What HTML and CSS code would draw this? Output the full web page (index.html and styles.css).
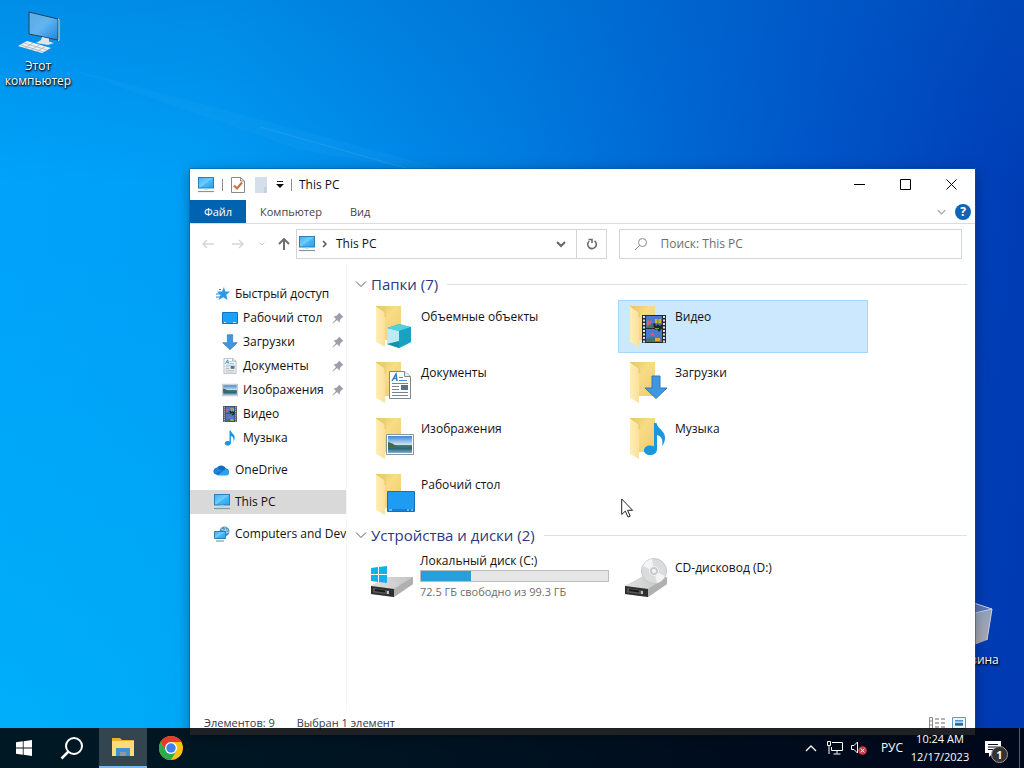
FILE: index.html
```html
<!DOCTYPE html>
<html lang="ru">
<head>
<meta charset="utf-8">
<title>This PC</title>
<link rel="stylesheet" href="styles.css">
</head>
<body>
<svg class="defs" width="0" height="0" aria-hidden="true">
  <defs>
    <linearGradient id="g-screen" x1="0" y1="0" x2="1" y2="1"><stop offset="0" stop-color="#3fb0f5"/><stop offset=".5" stop-color="#74cdfb"/><stop offset=".52" stop-color="#4ab9f7"/><stop offset="1" stop-color="#2b9fec"/></linearGradient>
    <linearGradient id="g-desk" x1="0" y1="0" x2="1" y2="1"><stop offset="0" stop-color="#5fa8e0"/><stop offset=".5" stop-color="#62b4f0"/><stop offset="1" stop-color="#1a86dc"/></linearGradient>
    <linearGradient id="g-back" x1="0" y1="0" x2="1" y2="1"><stop offset="0" stop-color="#e6c566"/><stop offset=".4" stop-color="#f8dd86"/><stop offset="1" stop-color="#ecca6c"/></linearGradient>
    <linearGradient id="g-front" x1="0" y1="0" x2="1" y2="0"><stop offset="0" stop-color="#ffeeb8"/><stop offset="1" stop-color="#fbe09a"/></linearGradient>
    <linearGradient id="g-drive" x1="0" y1="0" x2="1" y2="0"><stop offset="0" stop-color="#e0e0e0"/><stop offset="1" stop-color="#c4c4c4"/></linearGradient>
    <linearGradient id="g-sky" x1="0" y1="0" x2="0" y2="1"><stop offset="0" stop-color="#3f86d4"/><stop offset=".5" stop-color="#c9e4f5"/><stop offset=".55" stop-color="#4a7a78"/><stop offset=".75" stop-color="#2f6675"/><stop offset="1" stop-color="#7fb2cc"/></linearGradient>
    <linearGradient id="g-bin" x1="0" y1="0" x2="0" y2="1"><stop offset="0" stop-color="#8fa0c4"/><stop offset="1" stop-color="#a9a9ad"/></linearGradient>
  </defs>
  <symbol id="pc" viewBox="0 0 18 16">
    <rect x="1.5" y=".5" width="15" height="10.500" fill="url(#g-screen)" stroke="#2d7fb8"/>
    <path d="M7 11h4v1.500H7z" fill="#9dc6e0"/><path d="M1 14.500h16" stroke="#7f98a8" stroke-width="1.200"/>
  </symbol>
  <symbol id="folder" viewBox="0 0 48 48">
    <path d="M8 4h24v34H8z" fill="url(#g-back)"/>
    <path d="M7 4l9 6v35l-9-5z" fill="url(#g-front)"/>
    <path d="M7 4l9 6v5" fill="none" stroke="#eac66c"/>
  </symbol>
  <symbol id="arrow" viewBox="0 0 24 24">
    <path d="M8 1h8v12h7L12 23.500 1 13h7z" fill="#3e97e0" stroke="#2f79b9"/>
  </symbol>
  <symbol id="note" viewBox="0 0 24 34">
    <path d="M11 1h2.500c1 6 9.500 8 8.500 16-.3 3-1.500 5-3 7 1-5 .5-9-5-11v14c0 4-3 6-7 6-3.500 0-6-2-6-4.500C1 25 4 23.500 7 23.500c1.500 0 3 .3 4 1z" fill="#1b97e0"/>
  </symbol>
  <symbol id="film" viewBox="0 0 24 28">
    <path d="M0 0h24v28H0z" fill="#23272e"/>
    <path d="M4 1h16v12H4zM4 14h16v13H4z" fill="#4a78cd"/>
    <path d="M4 10q4-3 9-1v4H4zM4 24q5-3 9-1v4H4z" fill="#3d766a"/>
    <path d="M5 5l5 1-2 4-3 1zM8 20l3-3 2 4z" fill="#e0567a"/>
    <path d="M13 4h6v4h-6zM13 23h5v3h-5z" fill="#e0ad25"/><path d="M11 9l2-1 1 3 2-2 2 2 2-2v4l-3 4-2-3-2 1z" fill="#20252b"/><path d="M15 4h2v4h-2zM13 13h4v1h-4z" fill="#76a83b"/>
    <path d="M2 1v27M22 1v27" stroke="#dfe5e9" stroke-width="2" stroke-dasharray="2 1.500"/>
  </symbol>
  <symbol id="picture" viewBox="0 0 28 21">
    <path d="M.5.5h27v20H.5z" fill="#fff" stroke="#8b949b"/>
    <path d="M2 2h24v17H2z" fill="url(#g-sky)"/><path d="M2 8q5 1 8 4t16 1v1H2z" fill="#426b4c"/>
  </symbol>
  <symbol id="doc" viewBox="0 0 22 28">
    <path d="M.5.5h15l6 5v22H.5z" fill="#fff" stroke="#7c8790"/><path d="M15.500.5v5h6" fill="#e9edf0" stroke="#7c8790"/>
    <path d="M3 10l4-7 1 7M5 7.500h3" fill="none" stroke="#2d7fc4" stroke-width="1.500"/>
    <path d="M10 6.500h4M10 9.500h8M3 12.500h16" stroke="#4a8fc6"/><path d="M3 15.500h7M3 18.500h7M3 21.500h16M3 24.500h16" stroke="#77848e"/><path d="M12 14h7v5h-7z" fill="#55748a"/>
  </symbol>
  <symbol id="screen" viewBox="0 0 28 21">
    <path d="M.5.5h27v20H.5z" fill="#1e9cf4" stroke="#1470b8"/><path d="M1 19h26" stroke="#0f69b4"/><path d="M2 19h3M20 19h2M24 19h2" stroke="#d4ecff"/>
  </symbol>
  <symbol id="pin" viewBox="0 0 12 12">
    <path d="M7 .5L11.500 5l-1.500.5-2 2.500-.5 2.500L5 8 1 11.500.5 11 4 7 1.500 4.500 4 4l2.500-2z" fill="#9aa0a5"/>
  </symbol>
  <symbol id="drive" viewBox="0 0 44 24">
    <path d="M1 11L18 2h25v7L24 22 1 19z" fill="#bdbdbd"/>
    <path d="M1 11L18 2h25L24 14z" fill="url(#g-drive)"/>
    <path d="M1 11l23 3v8L1 19z" fill="#2e2e2e"/><path d="M3 13l16 2.500v4L3 17.500z" fill="#575757"/><path d="M5 15l10 1.500" stroke="#1b1b1b" stroke-width="2"/><path d="M18 16v3" stroke="#e6e6e6" stroke-width="1.500"/>
    <path d="M24 14L43 2v7L24 22z" fill="#b0b0b0"/>
  </symbol>
  <symbol id="chev" viewBox="0 0 12 8"><path d="M1 1.500l5 5 5-5" fill="none" stroke="currentColor"/></symbol>
  <symbol id="winlogo" viewBox="0 0 16 16"><path d="M0 2.300l6.800-1v6.300H0zM7.600 1.200L16 0v7.600H7.600zM0 8.400h6.800v6.300L0 13.700zM7.600 8.400H16V16l-8.400-1.200z" fill="currentColor"/></symbol>
</svg>

<main class="desktop">
  <svg class="wallpaper" viewBox="0 0 1024 768" preserveAspectRatio="none" aria-hidden="true">
    <path d="M60 66L500 184 300 150z" fill="#37b5ff" opacity=".1"/>
    <path d="M260 127L420 172" stroke="#6cc4ff" opacity=".2"/>
  </svg>
  <a class="shortcut shortcut-pc" href="#">
    <svg width="48" height="44" viewBox="0 0 48 44">
      <path d="M15 1l29 7v21L15 23z" fill="url(#g-desk)" stroke="#23415c"/><path d="M44 8l1 .5v21l-1-.5" stroke="#e8dcc8" fill="none"/>
      <path d="M28 26l7 1.500v3l5 1.500-6 2-12-2 5-3z" fill="#dfe3e8"/>
      <path d="M13 30l24 7-9 5-24-7z" fill="#f1f1f1"/><path d="M10 32l23 7M7 34l23 7M19 32l-8 5M25 34l-8 5M31 35.500l-8 5" stroke="#a9b0b5" stroke-width=".8"/>
    </svg>
    <span>Этот компьютер</span>
  </a>
  <a class="shortcut shortcut-bin" href="#">
    <svg width="48" height="48" viewBox="0 0 48 48"><path d="M6 8l18-5 18 6-5 31-13 5-13-5z" fill="url(#g-bin)"/><path d="M6 8l18-5 18 6-17 4z" fill="#5d76b4" stroke="#c4cce0"/><path d="M42 9l-5 31" stroke="#cfd2da"/></svg>
    <span>Корзина</span>
  </a>

  <section class="window" aria-label="This PC">
    <header class="titlebar">
      <svg width="18" height="16"><use href="#pc"/></svg>
      <i class="sep"></i>
      <button class="quick" aria-label="Свойства"><svg width="14" height="16" viewBox="0 0 14 16"><path d="M.5.5h9l4 3.500v11.500H.5z" fill="#fff" stroke="#8a8a8a"/><path d="M9.500.5V4h4" fill="none" stroke="#8a8a8a"/><path d="M3 8.500l3 3 5-6" fill="none" stroke="#c8703c" stroke-width="2"/></svg></button>
      <button class="quick" aria-label="Новая папка"><svg width="14" height="16" viewBox="0 0 14 16"><path d="M1 0h12v16H1z" fill="#d5dfeb"/><path d="M10 10h3v6h-3z" fill="#c5d1e0"/></svg></button>
      <button class="quick quick-menu" aria-label="Настройка панели"><svg width="8" height="8" viewBox="0 0 8 8"><path d="M1 .5h6" stroke="#222"/><path d="M0 3h8L4 7z" fill="#111"/></svg></button>
      <i class="sep"></i>
      <h1>This PC</h1>
      <div class="controls">
        <button aria-label="Свернуть"><svg width="11" height="11" viewBox="0 0 11 11"><path d="M0 5.500h11" stroke="#000"/></svg></button>
        <button aria-label="Развернуть"><svg width="11" height="11" viewBox="0 0 11 11"><path d="M.5.5h10v10H.5z" fill="none" stroke="#000"/></svg></button>
        <button aria-label="Закрыть"><svg width="11" height="11" viewBox="0 0 11 11"><path d="M.5.5l10 10M10.500.5l-10 10" stroke="#000"/></svg></button>
      </div>
    </header>
    <nav class="tabs">
      <button class="tab tab-file">Файл</button>
      <button class="tab">Компьютер</button>
      <button class="tab">Вид</button>
      <button class="expand" aria-label="Развернуть ленту"><svg width="9" height="6" viewBox="0 0 12 8"><path d="M1 1.500l5 5 5-5" fill="none" stroke="#b5b5b5" stroke-width="2"/></svg></button>
      <button class="help" aria-label="Справка">?</button>
    </nav>
    <div class="addressrow">
      <div class="arrows">
        <button aria-label="Назад"><svg width="12" height="10" viewBox="0 0 12 10"><path d="M12 5H1M5 1L1 5l4 4" fill="none" stroke="#d6d6d6" stroke-width="1.500"/></svg></button>
        <button aria-label="Вперёд"><svg width="12" height="10" viewBox="0 0 12 10"><path d="M0 5h11M7 1l4 4-4 4" fill="none" stroke="#d6d6d6" stroke-width="1.500"/></svg></button>
        <button class="recent" aria-label="Последние"><svg width="6" height="4" viewBox="0 0 12 8"><path d="M1 1l5 5 5-5" fill="none" stroke="#cfcfcf" stroke-width="2"/></svg></button>
        <button class="up" aria-label="Вверх"><svg width="12" height="12" viewBox="0 0 12 12"><path d="M6 12V1M1 6l5-5 5 5" fill="none" stroke="#6e6e6e" stroke-width="2"/></svg></button>
      </div>
      <div class="address">
        <svg width="18" height="16"><use href="#pc"/></svg>
        <svg class="crumb" width="5" height="8" viewBox="0 0 5 8"><path d="M1 1l3 3-3 3" fill="none" stroke="#555" stroke-width="1.500"/></svg>
        <a href="#">This PC</a>
        <button class="drop" aria-label="Журнал"><svg width="10" height="7" viewBox="0 0 10 7"><path d="M1 1l4 4 4-4" fill="none" stroke="#666" stroke-width="2"/></svg></button>
        <button class="refresh" aria-label="Обновить"><svg width="12" height="12" viewBox="0 0 12 12"><path d="M8.500 2.800A4.300 4.300 0 1 1 3.300 3M2.500 1.500h3.500V5" fill="none" stroke="#6a6a6a" stroke-width="1.600"/></svg></button>
      </div>
      <label class="search">
        <svg width="14" height="14" viewBox="0 0 14 14"><circle cx="8.500" cy="5.500" r="4" fill="none" stroke="#8a8a8a"/><path d="M5.500 8.500L1 13" stroke="#8a8a8a"/></svg>
        <input type="text" placeholder="Поиск: This PC" aria-label="Поиск">
      </label>
    </div>
    <div class="body">
      <nav class="sidebar">
        <a class="root" href="#"><svg width="18" height="16" viewBox="0 0 18 16"><path d="M11 1l1.200 4.500H17l-3.700 3.200L14.500 14l-4.300-2.800L5.500 14l2-5L4 5.500h5z" fill="#2f98e4"/><path d="M3 8h4M3 11h4M6 3.500h2" stroke="#2a7fc9"/></svg>Быстрый доступ</a>
        <a href="#"><svg width="16" height="16" viewBox="0 0 16 16"><path d="M.5 2.500h15v11H.5z" fill="#1ea0f6" stroke="#1573ba"/><path d="M2 12.500h2M11 12.500h3" stroke="#cce8ff"/></svg><span>Рабочий стол</span><svg class="pin" width="12" height="12"><use href="#pin"/></svg></a>
        <a href="#"><svg width="16" height="16"><use href="#arrow"/></svg><span>Загрузки</span><svg class="pin" width="12" height="12"><use href="#pin"/></svg></a>
        <a href="#"><svg width="16" height="16"><use href="#doc"/></svg><span>Документы</span><svg class="pin" width="12" height="12"><use href="#pin"/></svg></a>
        <a href="#"><svg width="16" height="16"><use href="#picture"/></svg><span>Изображения</span><svg class="pin" width="12" height="12"><use href="#pin"/></svg></a>
        <a href="#"><svg width="16" height="16"><use href="#film"/></svg><span>Видео</span></a>
        <a href="#"><svg width="16" height="16"><use href="#note"/></svg><span>Музыка</span></a>
        <a class="root spaced" href="#"><svg width="18" height="16" viewBox="0 0 18 16"><path d="M4.500 13A3.700 3.700 0 0 1 4 5.700 5.200 5.200 0 0 1 13 6.500a3.400 3.400 0 0 1 1 6.500z" fill="#0f6cc4"/><path d="M4 13.500L12.500 7A3.400 3.400 0 0 1 14 13.500z" fill="#2aa3ee"/><path d="M4 5.700A3.700 3.700 0 0 0 1.500 12L10 9z" fill="#1a83da"/></svg>OneDrive</a>
        <a class="root spaced current" href="#" aria-current="page"><svg width="18" height="16"><use href="#pc"/></svg>This PC</a>
        <a class="root spaced" href="#"><svg width="18" height="16" viewBox="0 0 18 16"><circle cx="11.500" cy="5.500" r="5" fill="#4e93bf"/><path d="M8 3q3 2 7 1M9 8q4-1 7-2M12 1q2 4 0 9" fill="none" stroke="#b5d9ec"/><path d="M1.500 5.500h11v7h-11z" fill="url(#g-screen)" stroke="#2e7fb5"/><path d="M3 15h8" stroke="#66869a"/></svg><span>Computers and Devices</span></a>
      </nav>
      <div class="content">
        <h2><svg width="12" height="8"><use href="#chev"/></svg>Папки (7)</h2>
        <div class="grid">
          <a class="tile" href="#"><svg width="48" height="48" viewBox="0 0 48 48"><use href="#folder"/><path d="M18 26l12-4 12 3v15l-12 6-12-4z" fill="#2cb8d2"/><path d="M18 26l12 3v11l-12 2z" fill="#b9edf3"/><path d="M18 26l12-4 12 3-12 4z" fill="#53cfdf"/><path d="M30 29l12-4v15l-12 6z" fill="#18a2c2"/><path d="M18 42l12-3v7z" fill="#1591ae"/></svg><span>Объемные объекты</span></a>
          <a class="tile selected" href="#"><svg width="48" height="48" viewBox="0 0 48 48"><use href="#folder"/><use href="#film" x="19" y="13" width="24" height="28"/></svg><span>Видео</span></a>
          <a class="tile" href="#"><svg width="48" height="48" viewBox="0 0 48 48"><use href="#folder"/><use href="#doc" x="20" y="13" width="22" height="28"/></svg><span>Документы</span></a>
          <a class="tile" href="#"><svg width="48" height="48" viewBox="0 0 48 48"><use href="#folder"/><use href="#arrow" x="21" y="17" width="24" height="24"/></svg><span>Загрузки</span></a>
          <a class="tile" href="#"><svg width="48" height="48" viewBox="0 0 48 48"><use href="#folder"/><use href="#picture" x="17" y="20" width="28" height="21"/></svg><span>Изображения</span></a>
          <a class="tile" href="#"><svg width="48" height="48" viewBox="0 0 48 48"><use href="#folder"/><use href="#note" x="20" y="8" width="24" height="34"/></svg><span>Музыка</span></a>
          <a class="tile" href="#"><svg width="48" height="48" viewBox="0 0 48 48"><use href="#folder"/><use href="#screen" x="18" y="21" width="28" height="21"/></svg><span>Рабочий стол</span></a>
        </div>
        <h2><svg width="12" height="8"><use href="#chev"/></svg>Устройства и диски (2)</h2>
        <div class="grid">
          <a class="tile disk" href="#"><svg width="48" height="48" viewBox="0 0 48 48"><use href="#drive" x="1" y="22" width="44" height="24"/><path d="M2 15l7-1v7H2zM10 14l8-1v8h-8zM2 22h7v7l-7-1zM10 22h8v8l-8-1z" fill="#0fb3e6"/></svg>
            <span class="diskinfo"><span>Локальный диск (C:)</span><span class="bar" role="meter" aria-label="Занято" aria-valuemin="0" aria-valuemax="100" aria-valuenow="27"><i style="width:27%"></i></span><small>72.5 ГБ свободно из 99.3 ГБ</small></span></a>
          <a class="tile" href="#"><svg width="48" height="48" viewBox="0 0 48 48"><use href="#drive" x="1" y="22" width="44" height="24"/><circle cx="31" cy="18" r="12.500" fill="#dadcdd" stroke="#c4c7c9"/><path d="M31 18L20 13a12 12 0 0 1 9-7zM31 18l11 5a12 12 0 0 1-8 7z" fill="#f3f4f4"/><circle cx="31" cy="18" r="4.500" fill="#c7cacc" stroke="#f5f5f5"/><circle cx="31" cy="18" r="2" fill="#f6f6f6"/></svg><span>CD-дисковод (D:)</span></a>
        </div>
      </div>
    </div>
    <footer class="status">
      <span>Элементов: 9</span><span>Выбран 1 элемент</span>
      <div class="views">
        <button aria-label="Таблица"><svg width="16" height="12" viewBox="0 0 16 12"><path d="M.5.5h3v11h-3zM.5 4h3M.5 8h3" fill="none" stroke="#888"/><path d="M6 2h4M12 2h4M6 6h4M12 6h4M6 10h4M12 10h4" stroke="#666"/></svg></button>
        <button aria-label="Крупные значки"><svg width="14" height="12" viewBox="0 0 14 12"><path d="M.5.5h13v11H.5z" fill="#eaf4fd" stroke="#5b9bd1"/><path d="M3 3h8v6H3z" fill="url(#g-sky)"/></svg></button>
      </div>
    </footer>
  </section>

  <svg class="cursor" width="13" height="20" viewBox="0 0 13 20" aria-hidden="true"><path d="M.7 1v15.500l3.600-3.400 2.700 6 2.200-1-2.600-5.800h5z" fill="#fff" stroke="#222"/></svg>

  <footer class="taskbar">
    <button aria-label="Пуск"><svg width="16" height="16"><use href="#winlogo"/></svg></button>
    <button aria-label="Поиск"><svg width="24" height="24" viewBox="0 0 24 24"><circle cx="14" cy="10" r="8" fill="none" stroke="#fff" stroke-width="2"/><path d="M8.500 15.500L1.500 22.500" stroke="#fff" stroke-width="2.500"/></svg></button>
    <button class="active" aria-label="Проводник"><svg width="22" height="20" viewBox="0 0 22 20"><path d="M0 1h8l2 2h12v3H0z" fill="#eab02e"/><path d="M0 4h22v15H0z" fill="#fbdc78"/><path d="M4 11h14v8h-4v-4H8v4H4z" fill="#3f93d4"/><path d="M8 15h6v4H8z" fill="#8a9c9e"/></svg></button>
    <button aria-label="Chrome"><svg width="24" height="24" viewBox="0 0 24 24"><circle cx="12" cy="12" r="12" fill="#fbc116"/><path d="M1.600 6A12 12 0 0 1 22.400 6H12L6.800 15z" fill="#e33b2e"/><path d="M1.600 6A12 12 0 0 0 12 24l5.200-9L12 12H5.100z" fill="#2da94f"/><circle cx="12" cy="12" r="6" fill="#fff"/><circle cx="12" cy="12" r="4.700" fill="#3b82ea"/></svg></button>
    <div class="tray">
      <button aria-label="Скрытые значки"><svg width="12" height="8" viewBox="0 0 12 8"><path d="M1 7l5-5 5 5" fill="none" stroke="#fff" stroke-width="1.300"/></svg></button>
      <button aria-label="Сеть"><svg width="16" height="14" viewBox="0 0 16 14"><path d="M5 1.500h10.500v8H4.500V6M10 9.500v3M6.500 13h7" fill="none" stroke="#fff"/><path d="M.5.500h3v4h-3zM2 4.500V13" fill="none" stroke="#fff"/></svg></button>
      <button aria-label="Звук выключен"><svg width="16" height="14" viewBox="0 0 16 14"><path d="M.5 4.500H3L6.500 1v11L3 8.500H.5z" fill="none" stroke="#fff"/><circle cx="11.500" cy="9.500" r="4.300" fill="#d13d48"/><path d="M9.700 7.700l3.600 3.600M13.300 7.700l-3.600 3.600" stroke="#fff"/></svg></button>
      <button class="lang">РУС</button>
      <button class="clock"><span>10:24 AM</span><span>12/17/2023</span></button>
      <button class="notify" aria-label="Уведомления"><svg width="18" height="17" viewBox="0 0 18 17"><path d="M1 1h16v12H9l-4 4v-4H1z" fill="#fff"/><path d="M4 4.500h10M4 7h10M4 9.500h8" stroke="#07101f"/></svg><b>1</b></button>
      <button class="peek" aria-label="Показать рабочий стол"></button>
    </div>
  </footer>
</main>
</body>
</html>
```
FILE: styles.css
```css
* { box-sizing: border-box; }
body { margin: 0; font: 12px/16px "Open Sans", "Noto Sans", sans-serif; color: #111; }
button { border: 0; padding: 0; background: none; font: inherit; color: inherit; display: flex; align-items: center; justify-content: center; }
a { color: inherit; text-decoration: none; }
svg { flex: none; }
.defs { position: absolute; }

.desktop {
  position: relative; min-height: 100vh; overflow: hidden;
  background:
    radial-gradient(ellipse at 0 100%, rgba(0, 184, 250, .6), transparent 48%),
    linear-gradient(180deg, rgba(0, 90, 190, .3), transparent 24%),
    linear-gradient(97deg, #00a4fa 0, #009ff6 20%, #0080e2 46%, #0054c8 75%, #0040b8 90%, #0038b0 100%);
}
.wallpaper { position: absolute; inset: 0; width: 100%; height: 100%; }

.shortcut { position: absolute; display: flex; flex-direction: column; align-items: center; width: 76px; text-align: center; color: #fff; line-height: 15px; text-shadow: 0 1px 2px #000, 1px 1px 2px #000; }
.shortcut-pc { left: 0; top: 11px; gap: 3px; }
.shortcut-bin { right: 12px; top: 600px; gap: 4px; }

.window { position: absolute; left: 190px; right: 49px; top: 169px; bottom: 33px; display: flex; flex-direction: column; background: #fff; box-shadow: 0 0 0 1px rgba(0, 90, 170, .5), 0 2px 12px rgba(0, 0, 0, .35); }

.titlebar { display: flex; align-items: center; gap: 7px; height: 31px; padding: 0 1px 0 7px; }
.titlebar h1 { margin: 0; font-size: 12px; font-weight: 400; }
.sep { width: 1px; height: 12px; background: #8c8c8c; }
.quick { width: 16px; height: 20px; }
.quick-menu { width: 8px; }
.controls { display: flex; margin-left: auto; }
.controls button { width: 46px; height: 31px; }

.tabs { display: flex; align-items: center; height: 24px; border-bottom: 1px solid #dcdcdc; color: #444; }
.tab { height: 23px; padding: 0 14px; font-size: 11px; }
.tab-file { width: 56px; padding: 0; background: #0063b1; color: #fff; }
.expand { margin-left: auto; width: 22px; height: 22px; }
.help { width: 16px; height: 16px; margin: 0 4px 0 3px; border-radius: 50%; background: #0f64b5; color: #fff; font-weight: 700; }

.addressrow { display: flex; align-items: center; height: 40px; padding: 0 13px 0 12px; }
.arrows { display: flex; align-items: center; gap: 18px; width: 94px; }
.arrows .recent { margin-left: -3px; }
.arrows .up { margin-left: -5px; }
.address { display: flex; align-items: center; flex: 308 1 0; height: 30px; border: 1px solid #d5d5d5; padding-left: 1px; }
.crumb { margin: 0 9px 0 6px; }
.drop { margin-left: auto; width: 30px; height: 28px; }
.refresh { width: 30px; height: 28px; border-left: 1px solid #d5d5d5; }
.search { display: flex; align-items: center; gap: 12px; flex: 326 1 0; height: 30px; margin-left: 12px; padding-left: 14px; border: 1px solid #d5d5d5; }
.search input { flex: 1; min-width: 0; border: 0; padding: 0; outline: 0; font: inherit; }
.search input::placeholder { color: #6d6d6d; opacity: 1; }

.body { display: flex; flex: 1; min-height: 0; }
.sidebar { width: 157px; padding-top: 18px; border-right: 1px solid #f6f6f6; overflow: hidden; }
.sidebar a { display: flex; align-items: center; gap: 5px; height: 24px; padding-left: 32px; white-space: nowrap; overflow: hidden; }
.sidebar .root { padding-left: 23px; gap: 4px; }
.sidebar .spaced { margin-top: 8px; }
.sidebar .current { background: #d9d9d9; }
.pin { margin-left: auto; margin-right: 2px; }

.content { flex: 1; padding: 9px 8px 0 8px; }
.content h2 { display: flex; align-items: center; gap: 4px; height: 22px; margin: 0; font-size: 15px; font-weight: 400; color: #2b3a7e; }
.content h2 svg { color: #5c5c5c; }
.content h2::after { content: ""; flex: 1; height: 1px; margin-left: 5px; background: #e2e2e2; }
.grid { display: grid; grid-template-columns: repeat(auto-fill, 250px); gap: 3px 4px; padding: 5px 0 3px 9px; }
.tile { display: flex; gap: 4px; height: 53px; padding: 1px 4px; border: 1px solid transparent; }
.tile > span { padding-top: 7px; }
.selected { background: #cce8ff; border-color: #a5d6fb; }
.tile .diskinfo { display: flex; flex-direction: column; padding-top: 0; margin-left: -1px; width: 189px; }
.bar { height: 12px; margin: 1px 0 2px; border: 1px solid #bcbcbc; background: #e6e6e6; }
.bar i { display: block; height: 100%; background: #26a0da; }
.diskinfo small { font-size: 11px; color: #6d6d6d; }

.status { display: flex; align-items: center; gap: 22px; height: 24px; padding: 0 9px 0 14px; font-size: 11px; color: #333a4c; }
.views { display: flex; gap: 7px; margin-left: auto; }

.cursor { position: absolute; left: 621px; top: 498px; }

.taskbar { position: absolute; left: 0; right: 0; bottom: 0; display: flex; height: 40px; background: rgba(0, 2, 6, .88); color: #fff; }
.taskbar button { width: 48px; height: 40px; }
.taskbar .active { margin-left: 3px; background: #33454f; border-bottom: 2px solid #76b9ed; }
.tray { display: flex; margin-left: auto; }
.tray button { width: 24px; }
.tray .lang { width: 42px; }
.tray .clock { width: 54px; flex-direction: column; font-size: 11px; line-height: 18px; }
.tray .notify { position: relative; width: 52px; }
.notify b { position: absolute; left: 24px; top: 18px; width: 17px; height: 17px; border: 1px solid #9a9a9a; border-radius: 50%; background: #333; font-size: 11px; line-height: 15px; }
.tray .peek { width: 5px; border-left: 1px solid #555c66; }
```
